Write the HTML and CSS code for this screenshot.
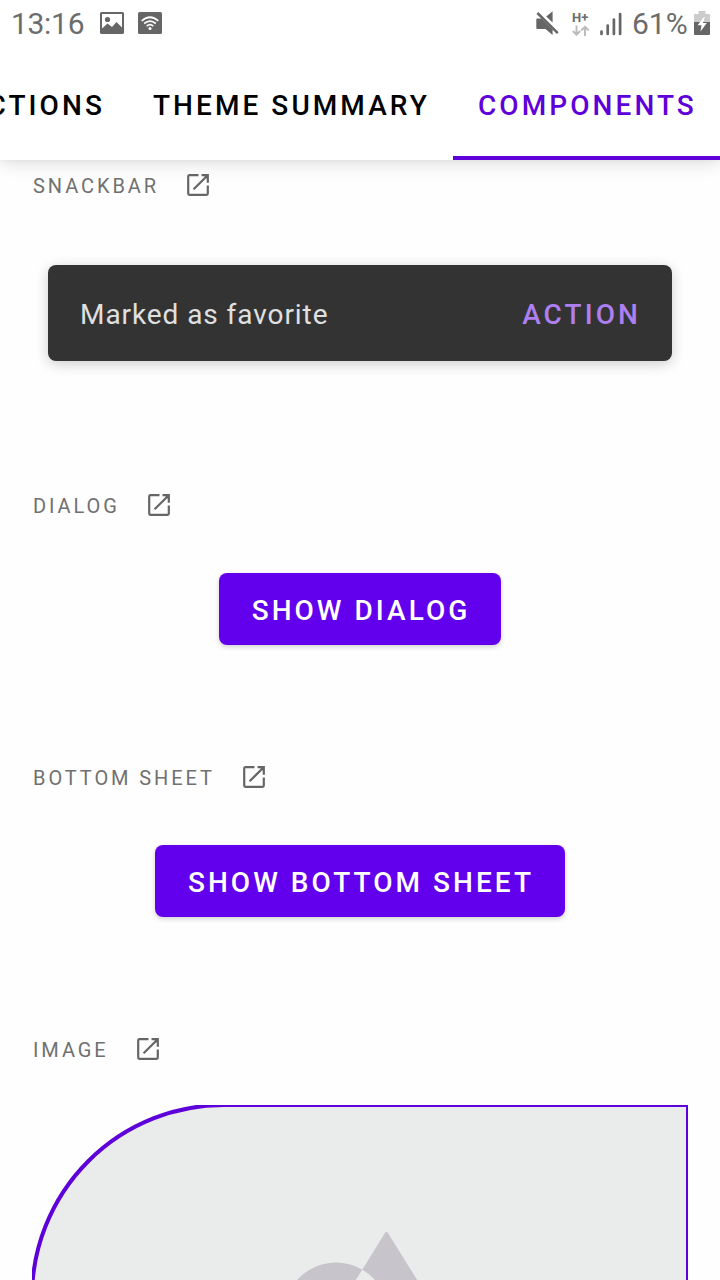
FILE: index.html
```html
<!DOCTYPE html>
<html lang="en">
<head>
<meta charset="utf-8">
<title>Components</title>
<link rel="stylesheet" href="styles.css">
</head>
<body>
<svg class="defs" width="0" height="0" aria-hidden="true">
  <symbol id="open" viewBox="0 0 24 24">
    <path d="M12.500 2.200H3.400Q2.200 2.200 2.200 3.400V20.600Q2.200 21.800 3.400 21.800H20.600Q21.800 21.800 21.800 20.600V12.500M15.500 2.200H21.800V9.700M21.500 2.500L7.600 16.200" fill="none" stroke="#666" stroke-width="2.200"/>
    <path d="M17.500 2.200H21.800V6.500Z" fill="#666"/>
  </symbol>
</svg>
<div class="screen">
  <header class="appbar">
    <div class="status">
      <span class="clock">13:16</span>
      <svg class="photo" width="24" height="24" viewBox="0 0 24 24"><path fill="#666" fill-rule="evenodd" d="M1.500 0H22.500Q24 0 24 1.500V20.500Q24 22 22.500 22H1.500Q0 22 0 20.500V1.500Q0 0 1.500 0ZM2 2V16.500L7.500 11.500L12 15L16.500 10L22 15.500V2Z"/><circle cx="7.500" cy="7.500" r="2.600" fill="#666"/></svg>
      <svg class="wifi" width="24" height="24" viewBox="0 0 24 24"><rect width="24" height="22" rx="1.500" fill="#666"/><g fill="none" stroke="#fff" stroke-width="1.700"><path d="M3.700 8.800Q12 1.700 20.300 8.800M6.200 11.500Q12 6.600 17.800 11.500M8.700 14.100Q12 11.300 15.300 14.100"/></g><circle cx="12" cy="16.500" r="1.500" fill="#fff"/></svg>
      <svg class="mute" width="24" height="26" viewBox="0 0 24 26"><path fill="#666" d="M1.300 7.500H5.500L14.500 16.500L16.600 18.600V24L9.500 18H1.300Q.3 18 .3 17V8.500Q.3 7.500 1.300 7.500ZM16.600 .3V11.500L10.200 5.500Z"/><path d="M1.400 2L21.800 22.200" stroke="#666" stroke-width="2.500"/></svg>
      <span class="net"><span class="hplus">H+</span><svg width="18" height="12" viewBox="0 0 18 12"><path d="M4.500 0.500V9.500M.8 6L4.500 9.700L8.200 6M13 11V2M9.300 5.500L13 1.800L16.700 5.500" fill="none" stroke="#bbb" stroke-width="2"/></svg></span>
      <svg class="signal" width="23" height="24" viewBox="0 0 23 24"><path d="M1.500 19.500V22M7.700 13.500V22M13.900 7.500V22M20.100 2V22" stroke="#666" stroke-width="2.700" stroke-linecap="round"/></svg>
      <span class="percent">61%</span>
      <svg class="battery" width="16" height="25" viewBox="0 0 16 25"><path fill="#ccc" d="M4.500 0H11.500V3H15Q16 3 16 4V11H0V4Q0 3 1 3H4.500Z"/><path fill="#666" d="M0 11H16V23Q16 24 15 24H1Q0 24 0 23Z"/><path fill="#fff" d="M10 6L3.500 14.200H7.500L6.500 20.500L12.800 12H9L10.800 6Z"/></svg>
    </div>
    <nav class="tabs">
      <a class="tab">INSTRUCTIONS</a>
      <a class="tab">THEME SUMMARY</a>
      <a class="tab active">COMPONENTS</a>
    </nav>
  </header>
  <main class="content">
    <section class="snack-section">
      <h2 class="overline">SNACKBAR<svg class="open"><use href="#open"/></svg></h2>
      <div class="snackbar"><span class="message">Marked as favorite</span><span class="action">ACTION</span></div>
    </section>
    <section class="button-section">
      <h2 class="overline">DIALOG<svg class="open"><use href="#open"/></svg></h2>
      <button class="button dialog">SHOW DIALOG</button>
    </section>
    <section class="button-section">
      <h2 class="overline">BOTTOM SHEET<svg class="open"><use href="#open"/></svg></h2>
      <button class="button sheet">SHOW BOTTOM SHEET</button>
    </section>
    <section>
      <h2 class="overline">IMAGE<svg class="open"><use href="#open"/></svg></h2>
      <svg class="image" width="656" height="175" viewBox="0 0 656 175">
        <path d="M0 400V192A192 192 0 0 1 192 0H656V400" fill="#eaeceb"/>
        <path d="M304 157.500a52 52 0 1 0 .01 0ZM353 128Q354.500 125.500 356 128L441 265H268Z" fill="#c8c4cc" fill-rule="evenodd"/>
        <path d="M0 400V192A192 192 0 0 1 192 0H656V400" fill="none" stroke="#5d00d9" stroke-width="4"/>
      </svg>
    </section>
  </main>
</div>
</body>
</html>
```
FILE: styles.css
```css
* { box-sizing: border-box; }
body { margin: 0; background: #fff; font-family: Roboto, sans-serif; }
.defs { display: block; }
.screen { width: 720px; height: 1280px; overflow: hidden; display: flex; flex-direction: column; background: #fefefe; }
.appbar { flex: none; height: 160px; background: #fff; box-shadow: 0 4px 16px rgba(0,0,0,.12), 0 0 5px rgba(0,0,0,.05); }
.status { display: flex; height: 48px; align-items: flex-start; padding: 0 10px 0 11px; color: #6c6c6c; }
.status svg { display: block; flex: none; }
.clock, .percent { font-size: 30px; line-height: 48px; white-space: nowrap; }
.clock { width: 89px; letter-spacing: -.3px; }
.photo, .wifi { margin-top: 12px; }
.wifi { margin-left: 14px; }
.mute { margin: 11px 0 0 374px; }
.net { display: flex; flex-direction: column; width: 28px; margin: 11px 0 0 12px; }
.hplus { font-size: 13px; line-height: 14px; height: 14px; font-weight: 700; }
.signal { margin-top: 12px; }
.percent { width: 62px; margin-left: 9px; letter-spacing: 0; }
.battery { margin: 11px 0 0 auto; }
.tabs { display: flex; justify-content: flex-end; height: 112px; }
.tab { flex: none; padding: 0 23px 0 25px; height: 112px; line-height: 115px; font-size: 28px; font-weight: 500; letter-spacing: 3.07px; white-space: nowrap; color: #000; }
.tab.active { width: 267px; padding-right: 0; color: #5d00d9; border-bottom: 4px solid #5d00d9; }
.content { padding: 9px 32px 0; }
.overline { display: flex; align-items: center; gap: 27px; margin: 0; padding: 2px 0 0 1px; height: 32px; font-size: 20px; line-height: 32px; font-weight: 400; letter-spacing: 2.92px; color: #707070; }
.open { width: 24px; height: 24px; margin-top: -2px; }
.snack-section { height: 320px; }
.snackbar { display: flex; align-items: center; justify-content: space-between; height: 96px; margin: 64px 16px 0; padding: 2px 31px 0 32px; border-radius: 8px; background: #333; box-shadow: 0 3px 14px rgba(0,0,0,.2); font-size: 28px; }
.message { color: #e0e0e0; letter-spacing: .93px; }
.action { color: #ae7ff0; font-weight: 500; letter-spacing: 3.07px; }
.button-section { height: 272px; display: flex; flex-direction: column; }
.button { align-self: center; height: 72px; margin-top: 52px; padding: 3px 0 0 2px; border: 0; border-radius: 8px; background: #6200ee; color: #fff; font: 500 28px/69px Roboto, sans-serif; letter-spacing: 3.03px; white-space: nowrap; box-shadow: 0 2px 5px rgba(0,0,0,.18); }
.dialog { width: 282px; }
.sheet { width: 410px; }
.image { display: block; margin-top: 40px; }
```
